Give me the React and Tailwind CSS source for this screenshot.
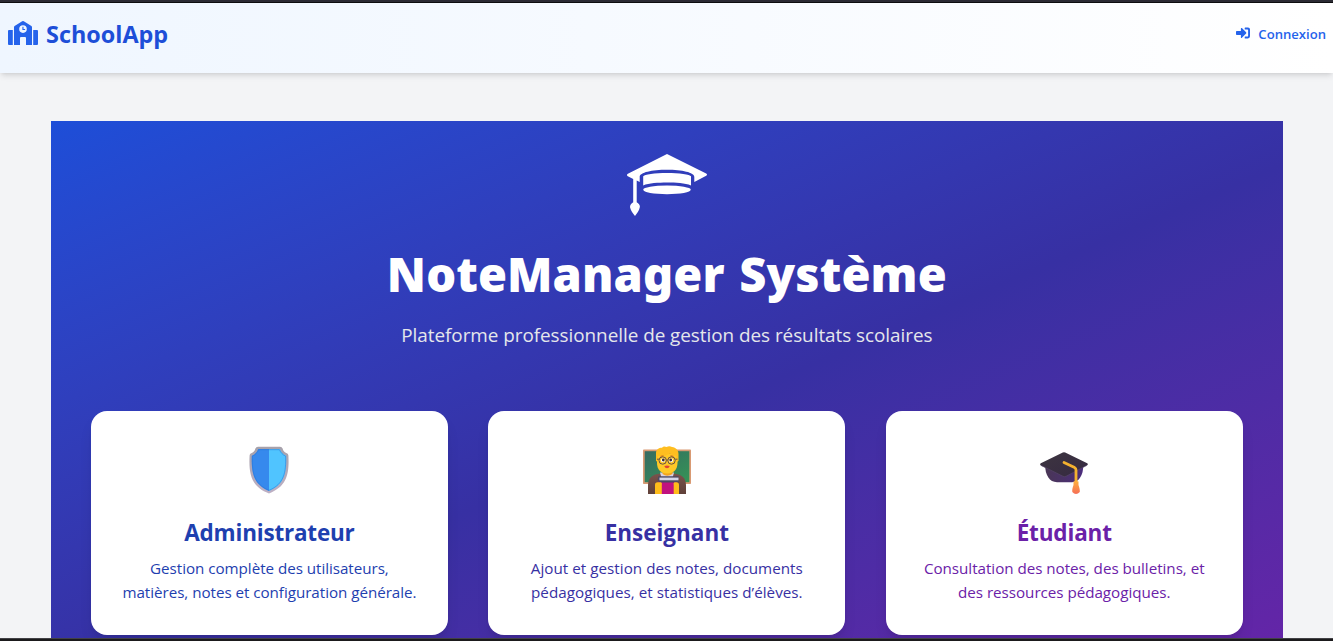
function SchoolIcon() {
  return (
    <svg viewBox="0 0 30 24" className="-mt-0.5 h-6 w-[30px] shrink-0 text-[#2563eb]" fill="currentColor">
      <path
        fillRule="evenodd"
        d="M14.2.3Q15-.2 15.8.3L23.400 5.100Q24 5.500 24 6.200V24H18V17Q18 16 17 16H13Q12 16 12 17V24H6V6.200Q6 5.500 6.600 5.100ZM15 4.300A3.800 3.800 0 1 0 15 11.900A3.800 3.800 0 1 0 15 4.300Z"
      />
      <path d="M14.400 5.800H15.500V8H17.100V9.100H14.400Z" />
      <path d="M1 9H4.800V24H1Q0 24 0 23V10Q0 9 1 9ZM25.200 9H29Q30 9 30 10V23Q30 24 29 24H25.200Z" />
    </svg>
  );
}

function LoginIcon() {
  return (
    <svg viewBox="0 0 14 12" className="-mt-0.5 h-3 w-3.5 shrink-0" fill="currentColor">
      <path d="M0 4.8Q0 4 .8 4H4.9V1.5Q5.1.6 5.9 1.1L10.1 5.3Q10.6 6 10.1 6.6L5.9 10.8Q5.1 11.3 4.9 10.4V8H.8Q0 8 0 7.2Z" />
      <path d="M9.2.5H12Q14 .6 14 2.6V9.3Q13.9 11.4 12 11.4H9.2Q8.7 11.4 8.7 10.9V10Q8.7 9.5 9.2 9.5H11.5Q12.1 9.5 12.1 8.9V3Q12.1 2.4 11.5 2.4H9.2Q8.7 2.4 8.7 1.9V1Q8.7.5 9.2.5Z" />
    </svg>
  );
}

function GraduationCap() {
  return (
    <svg viewBox="0 0 80 62" className="h-[62px] w-20" fill="#fff">
      <path d="M40 0 79.2 19.6Q81 20.8 79.2 21.8L67.3 28V23C67.3 18.4 55 15.8 40 15.8S12.7 18.4 12.7 23V27.9L9.7 26.6V48.2C12 49.5 13.2 51.3 12.8 53.2C12.2 56.5 9.8 59.4 8 62C6 59.4 3.7 56.6 3.1 53.4C2.7 51.5 4 49.4 6.2 48.2V24.9L.8 22.2Q-.9 20.8 .9 19.7Z" />
      <path d="M16.2 22.3C17 20.5 28 18.9 40 18.9S63.2 20.5 64 22.3V31.500C58 29.2 49 28.6 40 28.6S22 29.2 16.2 31.500Z" />
      <ellipse cx="40" cy="35.8" rx="23.8" ry="4.4" />
    </svg>
  );
}

function ShieldEmoji() {
  return (
    <svg viewBox="0 0 48 48" className="size-12">
      <defs>
        <linearGradient id="rim" x1="0" y1="0" x2="0" y2="1">
          <stop stopColor="#a6a1ab" />
          <stop offset="1" stopColor="#beb0c4" />
        </linearGradient>
      </defs>
      <path fill="url(#rim)" d="M13 .8H35Q37 .8 37.6 2.6C38.2 5 39.6 6.5 41.8 7.2Q43.3 7.8 43.4 9.4C44.2 26 43 40.5 24 47.4C5 40.5 3.8 26 4.6 9.4Q4.7 7.8 6.2 7.2C8.4 6.5 9.8 5 10.4 2.6Q11 .8 13 .8Z" />
      <path fill="#3689ed" d="M13.2 3.1H24V45C8.200 38.6 6.200 26.200 6.800 9.700C9.800 8.600 11.900 6.300 13.200 3.100Z" />
      <path fill="#50c4ff" d="M34.8 3.1H24V45C39.8 38.6 41.8 26.2 41.2 9.700C38.200 8.600 36.100 6.300 34.800 3.100Z" />
      <path fill="none" stroke="#2873d4" strokeOpacity=".5" strokeWidth="1" d="M24 44.300C8.700 38 6.900 26 7.400 10.100C10.200 9 12.300 6.700 13.600 3.700H34.400C35.700 6.700 37.800 9 40.600 10.100C41.100 26 39.300 38 24 44.300Z" />
    </svg>
  );
}

function TeacherEmoji() {
  return (
    <svg viewBox="0 0 48 48" className="size-12">
      <defs>
        <linearGradient id="board" x1="0" y1="0" x2="1" y2="1">
          <stop stopColor="#376b62" />
          <stop offset="1" stopColor="#349456" />
        </linearGradient>
        <linearGradient id="coat" x1="0" y1="0" x2="0" y2="1">
          <stop stopColor="#79534c" />
          <stop offset="1" stopColor="#604039" />
        </linearGradient>
      </defs>
      <rect y="3.500" width="48" height="34.500" rx=".8" fill="#d99a73" />
      <rect x="1.700" y="5.200" width="44.600" height="31" fill="url(#board)" />
      <path fill="url(#coat)" d="M5 48V39C5 31.500 10 28.400 17 27.500H31C38 28.400 43 31.500 43 39V48Z" />
      <path fill="#d8d3e6" d="M17 26.500H31L29 34H19Z" />
      <path fill="#f4a51d" d="M19.500 20H29.500V28Q24 31.500 19.500 28Z" />
      <path fill="#ffc927" d="M14 8H34.500V17C34.500 23.500 30.500 27.500 24.200 27.500S14 23.500 14 17Z" />
      <path fill="#ffbe20" d="M13 15V7C13 3 16.500 1.500 19 1.700Q20.500-.2 23.500.9Q26.500-.7 29 1.100C33 1.500 35.500 4.500 35.500 8V15L33.500 16V10Q29 9 27 7.800Q22 10.500 15 10V16Z" />
      <path fill="none" stroke="#d0661b" strokeWidth="1" d="M17.500 10.300 20.500 9.800M27.500 9.800 30.500 10.300" />
      <circle cx="20" cy="14.200" r="2" fill="#fff" />
      <circle cx="28" cy="14.200" r="2" fill="#fff" />
      <circle cx="20.300" cy="14" r="1.400" fill="#402a32" />
      <circle cx="27.700" cy="14" r="1.400" fill="#402a32" />
      <g fill="none" stroke="#665046" strokeWidth="1">
        <circle cx="19.700" cy="14.500" r="3.700" />
        <circle cx="28.500" cy="14.500" r="3.700" />
        <path d="M14 13.200H16M32.200 13.200H34.500M23.400 14H24.800" />
      </g>
      <path fill="#e04535" d="M21.300 20Q24 19.200 26.700 20Q26 22.200 24 22.200T21.300 20Z" />
      <path fill="#c1127e" d="M15 35H34V48H15Z" />
      <path fill="#4c4963" d="M15.500 30.300H35.500V36.500H15.500Q13.800 33.500 15.500 30.300Z" />
      <path fill="#d5d6e8" d="M16.500 31.600H35.500V34.300H16.500Z" />
      <path fill="#ffbc1b" d="M12 39Q12 36.300 14.500 36.300H18Q19.500 37 18.800 39V48H12ZM36 39Q36 36.300 33.500 36.300H31.500Q30 37 30.700 39V48H36Z" />
    </svg>
  );
}

function CapEmoji() {
  return (
    <svg viewBox="0 0 48 48" className="size-12">
      <defs>
        <linearGradient id="capTop" x1="0" y1="0" x2="1" y2="1">
          <stop stopColor="#3d3540" />
          <stop offset="1" stopColor="#352941" />
        </linearGradient>
        <linearGradient id="capBase" x1="0" y1="0" x2="1" y2="0">
          <stop stopColor="#493655" />
          <stop offset="1" stopColor="#4c2d7d" />
        </linearGradient>
        <linearGradient id="tassel" x1="0" y1="0" x2="0" y2="1">
          <stop stopColor="#ffb13c" />
          <stop offset="1" stopColor="#f56d57" />
        </linearGradient>
      </defs>
      <path fill="url(#capBase)" d="M5.200 19H43.200C43.500 29 39 36.200 32 36.200H17C9.500 36.200 5 29 5.200 19Z" />
      <path fill="url(#capTop)" d="M22.800 6.500Q24 5.900 25.200 6.500L47.200 17.200Q48.500 18.200 47.200 19.300L26 30.500Q24.500 31.200 23 30.500L.8 19.500Q-.5 18.400 .8 17.300Z" />
      <path fill="none" stroke="#5a4870" strokeWidth=".6" d="M1 19.400 23 30.300Q24.500 31 26 30.300L47 19.300" />
      <path fill="none" stroke="#f4b12f" strokeWidth="2.800" strokeLinecap="round" strokeLinejoin="round" d="M24 16.500 34.600 21.600Q36 22.500 36 24V37" />
      <path fill="url(#tassel)" d="M33.500 35.500Q36 34.300 38.500 35.500V39C39.300 41.500 40 43.500 39.800 46Q38 48 36 48T32.300 46C32 43.500 32.700 41.500 33.500 39Z" />
    </svg>
  );
}

const roles = [
  {
    title: "Administrateur",
    Icon: ShieldEmoji,
    color: "text-[#1e40af]",
    tracking: "tracking-[-0.2px]",
    lines: ["Gestion complète des utilisateurs,", "matières, notes et configuration générale."],
    lineTracking: "tracking-[-0.04px]",
  },
  {
    title: "Enseignant",
    Icon: TeacherEmoji,
    color: "text-[#3730a3]",
    tracking: "tracking-normal",
    lines: ["Ajout et gestion des notes, documents", "pédagogiques, et statistiques d’élèves."],
    lineTracking: "tracking-[0.03px]",
  },
  {
    title: "Étudiant",
    Icon: CapEmoji,
    color: "text-[#6b21a8]",
    tracking: "tracking-[-0.15px]",
    lines: ["Consultation des notes, des bulletins, et", "des ressources pédagogiques."],
    lineTracking: "tracking-[-0.03px]",
  },
];

function RoleCard({ title, Icon, color, tracking, lines, lineTracking }) {
  return (
    <article className={`flex h-56 flex-col items-center rounded-2xl bg-white pt-[35px] text-center shadow-lg ${color}`}>
      <Icon />
      <h2 className={`mt-[23px] text-[22.5px] leading-8 font-bold ${tracking}`}>{title}</h2>
      <p className={`mt-[7px] text-[15.2px] leading-6 whitespace-nowrap ${lineTracking}`}>
        {lines.map((line) => (
          <span key={line} className="block">{line}</span>
        ))}
      </p>
    </article>
  );
}

export default function App() {
  return (
    <div className="flex h-[641px] flex-col overflow-hidden bg-[#f3f4f6] font-['Open_Sans','Noto_Sans',sans-serif]">
      <div className="h-[3px] shrink-0 border-b border-[#0e0e10] bg-[#2b2a33]" />
      <header className="z-10 flex h-[70px] shrink-0 items-center justify-between bg-linear-to-r from-[#eff6ff] to-white pr-[7px] pb-2 pl-2 shadow-md">
        <div className="flex items-center gap-2">
          <SchoolIcon />
          <span className="-mt-px text-[23.4px] leading-8 font-bold text-[#1d4ed8]">SchoolApp</span>
        </div>
        <a className="flex items-center gap-2 text-[13.1px] leading-5 font-semibold text-[#2563eb]">
          <LoginIcon />
          <span>Connexion</span>
        </a>
      </header>
      <main className="min-h-0 flex-1 overflow-hidden pt-12 pr-[50.15px] pl-[50.85px]">
        <section className="flex h-[610px] flex-col items-center bg-linear-157 from-[#1d4ed8] via-[#3730a3] to-[#6b21a8] px-10 pt-[33px]">
          <GraduationCap />
          <h1 className="mt-[34px] font-['Noto_Sans','Open_Sans',sans-serif] text-[47px] leading-[48px] font-black tracking-[0.1px] text-white [word-spacing:2.5px]">
            NoteManager Système
          </h1>
          <p className="mt-[23px] text-[18.9px] leading-7 tracking-[-0.04px] text-[#e5e7eb]">
            Plateforme professionnelle de gestion des résultats scolaires
          </p>
          <div className="mt-[62px] grid w-full grid-cols-3 gap-[40.2px]">
            {roles.map((role) => (
              <RoleCard key={role.title} {...role} />
            ))}
          </div>
        </section>
      </main>
      <div className="h-[3px] shrink-0 border-t border-[#424145] bg-[#1b1a1c]" />
    </div>
  );
}
